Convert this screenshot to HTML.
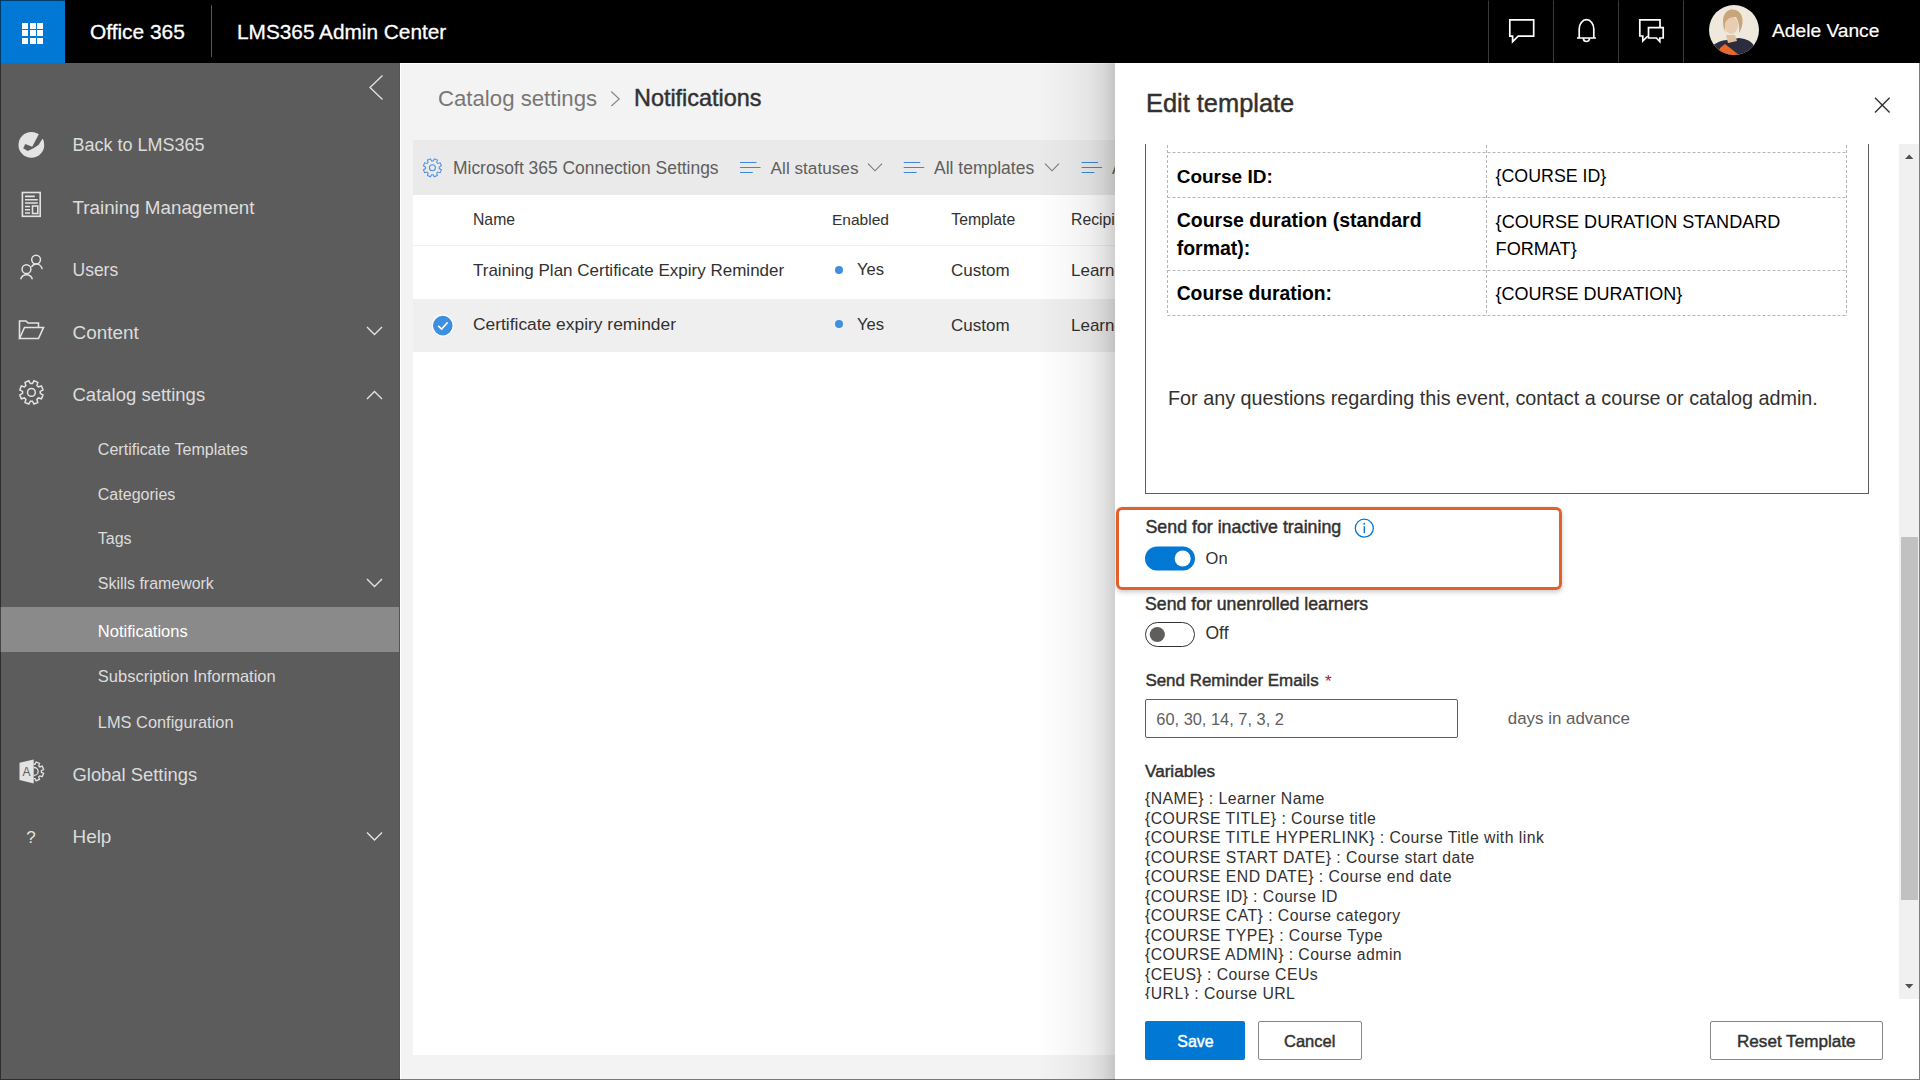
<!DOCTYPE html>
<html><head><meta charset="utf-8"><title>LMS365 Admin Center</title>
<style>
html,body{margin:0;padding:0;width:1920px;height:1080px;overflow:hidden;background:#f3f3f3}
body{position:relative;font-family:"Liberation Sans",sans-serif}
.t{position:absolute;white-space:pre;line-height:1}
.r{position:absolute}
</style></head><body>
<div class="r" style="left:0px;top:0px;width:1920px;height:63px;background:#000;"></div>
<div class="r" style="left:0px;top:0px;width:65px;height:63px;background:#0078d4;"></div>
<div class="r" style="left:22.2px;top:23.0px;width:5.9px;height:5.9px;background:#fff;"></div>
<div class="r" style="left:22.2px;top:30.4px;width:5.9px;height:5.9px;background:#fff;"></div>
<div class="r" style="left:22.2px;top:37.8px;width:5.9px;height:5.9px;background:#fff;"></div>
<div class="r" style="left:29.7px;top:23.0px;width:5.9px;height:5.9px;background:#fff;"></div>
<div class="r" style="left:29.7px;top:30.4px;width:5.9px;height:5.9px;background:#fff;"></div>
<div class="r" style="left:29.7px;top:37.8px;width:5.9px;height:5.9px;background:#fff;"></div>
<div class="r" style="left:37.2px;top:23.0px;width:5.9px;height:5.9px;background:#fff;"></div>
<div class="r" style="left:37.2px;top:30.4px;width:5.9px;height:5.9px;background:#fff;"></div>
<div class="r" style="left:37.2px;top:37.8px;width:5.9px;height:5.9px;background:#fff;"></div>
<div class="t" style="left:90px;top:21.91px;font-size:20.9px;color:#fff;font-weight:400;-webkit-text-stroke:0.3px #fff;">Office 365</div>
<div class="r" style="left:211px;top:5px;width:1px;height:52px;background:#555;"></div>
<div class="t" style="left:237px;top:21.99px;font-size:20.8px;color:#fff;font-weight:400;-webkit-text-stroke:0.3px #fff;">LMS365 Admin Center</div>
<div class="r" style="left:1488px;top:0px;width:1px;height:63px;background:#3a3a3a;"></div>
<div class="r" style="left:1553px;top:0px;width:1px;height:63px;background:#3a3a3a;"></div>
<div class="r" style="left:1618px;top:0px;width:1px;height:63px;background:#3a3a3a;"></div>
<div class="r" style="left:1683px;top:0px;width:1px;height:63px;background:#3a3a3a;"></div>
<svg class="r" style="left:1490px;top:0px" width="200" height="63" viewBox="1490 0 200 63">
<g fill="none" stroke="#fff" stroke-width="1.7">
<path d="M1509.8 19.9 H1533.7 V36.1 H1518.2 L1512.6 41.6 V36.1 H1509.8 Z"/>
<path d="M1577 38 H1596 M1579.2 38 V29 A7.3 9.3 0 0 1 1593.8 29 V38 M1583.5 38.5 A3 3 0 0 0 1589.5 38.5"/>
<path d="M1648.5 27.6 H1663.2 V38 H1659.8 V41.6 L1656.4 38 H1648.5 Z"/>
<path d="M1660 27.6 V19.9 H1639.8 V36 H1642.8 V41 L1647.8 36"/>
</g></svg>
<svg class="r" style="left:1709px;top:5px" width="50" height="50" viewBox="0 0 50 50">
<defs><clipPath id="av"><circle cx="25" cy="25" r="25"/></clipPath></defs>
<g clip-path="url(#av)">
<rect width="50" height="50" fill="#efe8dd"/>
<path d="M-2 52 L2 42 Q10 35 18 35 L30 33 Q42 34 46 42 L52 52 Z" fill="#2b2c3d"/>
<path d="M8 52 L11 43 L16 39 L30 50 L30 52 Z" fill="#e8692a"/>
<path d="M17 30 L26 30 L28 36 L19 38 Z" fill="#dfbf9f"/>
<ellipse cx="22.3" cy="20" rx="6.8" ry="9" fill="#e8cdb2"/>
<path d="M14.5 22 Q12 7 22 4.5 Q32 4 33.5 14 Q34 22 30 28 Q31 18 27 12 Q19 11 16 18 Q15.5 26 17 30 Z" fill="#c8a679"/>
</g></svg>
<div class="t" style="left:1772px;top:21.25px;font-size:19.2px;color:#fff;font-weight:400;-webkit-text-stroke:0.2px #fff;">Adele Vance</div>
<div class="r" style="left:0px;top:63px;width:400px;height:1017px;background:#5c5c5c;"></div>
<div class="r" style="left:399px;top:63px;width:1px;height:1017px;background:#555;"></div>
<svg class="r" style="left:360px;top:70px" width="30" height="36" viewBox="360 70 30 36">
<path d="M382.5 75.5 L370 87.5 L382.5 99.5" fill="none" stroke="#e3e3e3" stroke-width="1.3"/></svg>
<div class="t" style="left:72.5px;top:136.46px;font-size:18.0px;color:#dcdcdc;font-weight:400;">Back to LMS365</div>
<div class="t" style="left:72.5px;top:199.09px;font-size:18.8px;color:#dcdcdc;font-weight:400;">Training Management</div>
<div class="t" style="left:72.5px;top:261.89px;font-size:17.5px;color:#dcdcdc;font-weight:400;">Users</div>
<div class="t" style="left:72.5px;top:324.00px;font-size:18.9px;color:#dcdcdc;font-weight:400;">Content</div>
<div class="t" style="left:72.5px;top:386.14px;font-size:18.5px;color:#dcdcdc;font-weight:400;">Catalog settings</div>
<div class="t" style="left:72.5px;top:766.02px;font-size:18.4px;color:#dcdcdc;font-weight:400;">Global Settings</div>
<div class="t" style="left:72.5px;top:827.90px;font-size:18.9px;color:#dcdcdc;font-weight:400;">Help</div>
<div class="r" style="left:0px;top:607px;width:399px;height:45px;background:#8a8a8a;"></div>
<div class="t" style="left:97.8px;top:441.37px;font-size:16.1px;color:#dcdcdc;font-weight:400;">Certificate Templates</div>
<div class="t" style="left:97.8px;top:485.61px;font-size:16.05px;color:#dcdcdc;font-weight:400;">Categories</div>
<div class="t" style="left:97.8px;top:530.56px;font-size:16.0px;color:#dcdcdc;font-weight:400;">Tags</div>
<div class="t" style="left:97.8px;top:576.20px;font-size:15.95px;color:#dcdcdc;font-weight:400;">Skills framework</div>
<div class="t" style="left:97.8px;top:623.03px;font-size:16.5px;color:#fff;font-weight:400;">Notifications</div>
<div class="t" style="left:97.8px;top:667.53px;font-size:16.5px;color:#dcdcdc;font-weight:400;">Subscription Information</div>
<div class="t" style="left:97.8px;top:713.52px;font-size:16.4px;color:#dcdcdc;font-weight:400;">LMS Configuration</div>
<svg class="r" style="left:0;top:0" width="400" height="1080">
<g fill="none" stroke="#e3e3e3" stroke-width="1.4"><path d="M367 327 L374.5 334.5 L382 327 M367 399 L374.5 391.5 L382 399 M367 579 L374.5 586.5 L382 579 M367 832.5 L374.5 840.0 L382 832.5"/></g>
<circle cx="31.35" cy="144.9" r="12.85" fill="#e3e3e3"/>
<path d="M38.8 134.3 L32.2 146.7 L25.3 144 L23.2 148.2 L27.7 151 Q34 148.5 38.7 144.7 L42.3 139 L46.5 138 L42 130 Z" fill="#5c5c5c"/>
<g fill="none" stroke="#e3e3e3" stroke-width="1.6">
<rect x="22.4" y="192.5" width="17.8" height="23.8"/>
<path d="M25 196.4 H34.8 M25 199.8 H37.8 M25 203 H37.8 M25 206.5 H30 M25 209.8 H30 M25 213 H30"/>
<rect x="32.5" y="206" width="5.3" height="7.5"/>
</g>
<g fill="none" stroke="#e3e3e3" stroke-width="1.5">
<circle cx="26.5" cy="269.2" r="4.4"/>
<path d="M20.7 279.2 A6.2 6.8 0 0 1 32.4 279.2"/>
<circle cx="36.1" cy="259.6" r="4.4"/>
<path d="M31.5 266.8 A6.0 6.8 0 0 1 42.2 269.2"/>
</g>
<g fill="none" stroke="#e3e3e3" stroke-width="1.6">
<path d="M19.5 338.5 V321 H26 L28 323 H38.5 V327.5"/>
<path d="M19.5 338.5 L24.5 327.5 H43.5 L38.5 338.5 Z"/>
</g>
<g fill="none" stroke="#e3e3e3" stroke-width="1.5">
<path d="M32.41 383.56 L33.98 380.78 L37.79 382.36 L36.94 385.43 L38.37 386.86 L41.44 386.01 L43.02 389.82 L40.24 391.39 L40.24 393.41 L43.02 394.98 L41.44 398.79 L38.37 397.94 L36.94 399.37 L37.79 402.44 L33.98 404.02 L32.41 401.24 L30.39 401.24 L28.82 404.02 L25.01 402.44 L25.86 399.37 L24.43 397.94 L21.36 398.79 L19.78 394.98 L22.56 393.41 L22.56 391.39 L19.78 389.82 L21.36 386.01 L24.43 386.86 L25.86 385.43 L25.01 382.36 L28.82 380.78 L30.39 383.56 Z"/>
<circle cx="31.4" cy="392.4" r="3.9"/>
</g>
<defs><clipPath id="gh"><rect x="33.7" y="750" width="20" height="40"/></clipPath></defs>
<g clip-path="url(#gh)" fill="none" stroke="#e3e3e3" stroke-width="1.3">
<path d="M35.02 764.25 L36.11 761.99 L39.50 763.39 L38.68 765.77 L39.83 766.92 L42.21 766.10 L43.61 769.49 L41.35 770.58 L41.35 772.22 L43.61 773.31 L42.21 776.70 L39.83 775.88 L38.68 777.03 L39.50 779.41 L36.11 780.81 L35.02 778.55 L33.38 778.55 L32.29 780.81 L28.90 779.41 L29.72 777.03 L28.57 775.88 L26.19 776.70 L24.79 773.31 L27.05 772.22 L27.05 770.58 L24.79 769.49 L26.19 766.10 L28.57 766.92 L29.72 765.77 L28.90 763.39 L32.29 761.99 L33.38 764.25 Z"/>
<circle cx="34.2" cy="771.4" r="3.9"/>
</g>
<path d="M19.5 762.7 L33.7 759.5 V783.5 L19.5 780 Z" fill="#e3e3e3"/>
<text x="22.6" y="775.6" font-family="Liberation Sans" font-size="12" font-weight="400" fill="#5c5c5c">A</text>
<text x="26.3" y="843" font-family="Liberation Sans" font-size="17" fill="#e3e3e3">?</text>
</svg>
<div class="r" style="left:400px;top:63px;width:1520px;height:1017px;background:#f3f3f3;"></div>
<div class="r" style="left:400px;top:63px;width:1px;height:1017px;background:#fff;"></div>
<div class="r" style="left:400px;top:63px;width:715px;height:1px;background:#fff;"></div>
<div class="t" style="left:438px;top:88.11px;font-size:22.2px;color:#797775;font-weight:400;">Catalog settings</div>
<svg class="r" style="left:605px;top:85px" width="20" height="30"><path d="M6.3 6.5 L14.2 14 L6.3 21" fill="none" stroke="#8a8886" stroke-width="1.2"/></svg>
<div class="t" style="left:634px;top:87.09px;font-size:23.4px;color:#323130;font-weight:400;-webkit-text-stroke:0.45px currentColor;">Notifications</div>
<div class="r" style="left:413px;top:140px;width:702px;height:55px;background:#eaeaea;"></div>
<svg class="r" style="left:413px;top:140px" width="702" height="55" viewBox="413 140 702 55">
<g fill="none" stroke="#4a90e2" stroke-width="1.05">
<path d="M433.18 160.94 L434.39 158.82 L437.34 160.04 L436.70 162.40 L437.80 163.50 L440.16 162.86 L441.38 165.81 L439.26 167.02 L439.26 168.58 L441.38 169.79 L440.16 172.74 L437.80 172.10 L436.70 173.20 L437.34 175.56 L434.39 176.78 L433.18 174.66 L431.62 174.66 L430.41 176.78 L427.46 175.56 L428.10 173.20 L427.00 172.10 L424.64 172.74 L423.42 169.79 L425.54 168.58 L425.54 167.02 L423.42 165.81 L424.64 162.86 L427.00 163.50 L428.10 162.40 L427.46 160.04 L430.41 158.82 L431.62 160.94 Z"/>
<circle cx="432.4" cy="167.8" r="3.0"/>
</g>
<g fill="none" stroke="#3d87dc" stroke-width="1.1">
<path d="M740 162.5 H756.5 M740 167.5 H760.5 M740 172.5 H752.8"/>
<path d="M903.7 162.5 H920.2 M903.7 167.5 H924.2 M903.7 172.5 H916.5"/>
<path d="M1081.6 162.5 H1098.1 M1081.6 167.5 H1102.1 M1081.6 172.5 H1094.4"/>
</g>
<g fill="none" stroke="#797775" stroke-width="1.05">
<path d="M868 163.7 L875 170.8 L882 163.7"/>
<path d="M1045 163.7 L1052 170.8 L1059 163.7"/>
</g>
</svg>
<div class="t" style="left:453px;top:159.92px;font-size:17.46px;color:#605e5c;font-weight:400;">Microsoft 365 Connection Settings</div>
<div class="t" style="left:770.6px;top:160.14px;font-size:17.2px;color:#605e5c;font-weight:400;">All statuses</div>
<div class="t" style="left:934px;top:159.89px;font-size:17.5px;color:#605e5c;font-weight:400;">All templates</div>
<div class="t" style="left:1112px;top:159.89px;font-size:17.5px;color:#605e5c;font-weight:400;">A</div>
<div class="r" style="left:413px;top:195px;width:702px;height:860px;background:#fff;"></div>
<div class="r" style="left:413px;top:245px;width:702px;height:1px;background:#f0f0f0;"></div>
<div class="r" style="left:413px;top:299px;width:702px;height:1px;background:#f3f3f3;"></div>
<div class="r" style="left:413px;top:299px;width:702px;height:53px;background:#efefef;"></div>
<div class="t" style="left:473px;top:211.67px;font-size:15.75px;color:#323130;font-weight:400;">Name</div>
<div class="t" style="left:832px;top:211.88px;font-size:15.5px;color:#323130;font-weight:400;">Enabled</div>
<div class="t" style="left:951.3px;top:211.65px;font-size:15.77px;color:#323130;font-weight:400;">Template</div>
<div class="t" style="left:1071px;top:211.65px;font-size:15.77px;color:#323130;font-weight:400;">Recipients</div>
<div class="t" style="left:473px;top:262.11px;font-size:17.0px;color:#323130;font-weight:400;">Training Plan Certificate Expiry Reminder</div>
<div class="t" style="left:473px;top:316.27px;font-size:17.4px;color:#323130;font-weight:400;">Certificate expiry reminder</div>
<div class="t" style="left:857px;top:262.45px;font-size:16.6px;color:#323130;font-weight:400;">Yes</div>
<div class="t" style="left:951px;top:262.11px;font-size:17.0px;color:#323130;font-weight:400;">Custom</div>
<div class="t" style="left:1071px;top:262.11px;font-size:17.0px;color:#323130;font-weight:400;">Learners</div>
<div class="t" style="left:857px;top:316.95px;font-size:16.6px;color:#323130;font-weight:400;">Yes</div>
<div class="t" style="left:951px;top:316.61px;font-size:17.0px;color:#323130;font-weight:400;">Custom</div>
<div class="t" style="left:1071px;top:316.61px;font-size:17.0px;color:#323130;font-weight:400;">Learners</div>
<svg class="r" style="left:413px;top:195px" width="702" height="160" viewBox="413 195 702 160">
<circle cx="839" cy="270" r="4" fill="#3f8fe0"/>
<circle cx="839" cy="324" r="4" fill="#3f8fe0"/>
<circle cx="442.8" cy="325.6" r="11" fill="#fff"/>
<circle cx="442.8" cy="325.6" r="9.8" fill="#3f8fe0"/>
<path d="M438.2 325.8 L441.6 329 L447.6 322.4" fill="none" stroke="#fff" stroke-width="1.6"/>
</svg>
<div class="r" style="left:1035px;top:63px;width:80px;height:1017px;background:linear-gradient(to right,rgba(0,0,0,0) 0%,rgba(0,0,0,0.012) 20%,rgba(0,0,0,0.03) 45%,rgba(0,0,0,0.06) 68%,rgba(0,0,0,0.11) 85%,rgba(0,0,0,0.19) 100%)"></div>
<div class="r" style="left:1115px;top:63px;width:805px;height:1017px;background:#fff;"></div>
<div class="t" style="left:1146px;top:90.50px;font-size:25.4px;color:#323130;font-weight:400;-webkit-text-stroke:0.45px currentColor;">Edit template</div>
<svg class="r" style="left:1870px;top:93px" width="24" height="24" viewBox="1870 93 24 24"><path d="M1875 97.8 L1889.6 112.4 M1889.6 97.8 L1875 112.4" stroke="#323130" stroke-width="1.4" fill="none"/></svg>
<div class="r" style="left:1115px;top:144px;width:805px;height:855px;overflow:hidden">
<div class="r" style="left:30px;top:-14px;width:1px;height:363.5px;background:#605e5c;"></div>
<div class="r" style="left:753px;top:-14px;width:1px;height:363.5px;background:#605e5c;"></div>
<div class="r" style="left:30px;top:348.5px;width:724px;height:1px;background:#605e5c;"></div>
<svg class="r" style="left:0;top:0" width="805" height="200" viewBox="1115 144 805 200">
<g stroke="#b4b4b4" stroke-width="1" stroke-dasharray="3 2" fill="none">
<path d="M1167.5 130 V315.5 M1486.5 130 V315.5 M1846.5 130 V315.5"/>
<path d="M1167.5 152.5 H1846.5 M1167.5 197.5 H1846.5 M1167.5 270.5 H1846.5 M1167.5 315.5 H1846.5"/>
</g></svg>
<div class="t" style="left:61.700000000000045px;top:22.92px;font-size:19.0px;color:#000;font-weight:700;">Course ID:</div>
<div class="t" style="left:61.700000000000045px;top:67.49px;font-size:19.5px;color:#000;font-weight:700;">Course duration (standard</div>
<div class="t" style="left:61.700000000000045px;top:95.09px;font-size:19.5px;color:#000;font-weight:700;">format):</div>
<div class="t" style="left:61.700000000000045px;top:140.36px;font-size:19.3px;color:#000;font-weight:700;">Course duration:</div>
<div class="t" style="left:380.5999999999999px;top:24.13px;font-size:17.8px;color:#000;font-weight:400;">{COURSE ID}</div>
<div class="t" style="left:380.5999999999999px;top:68.68px;font-size:18.1px;color:#000;font-weight:400;">{COURSE DURATION STANDARD</div>
<div class="t" style="left:380.5999999999999px;top:96.28px;font-size:18.1px;color:#000;font-weight:400;">FORMAT}</div>
<div class="t" style="left:380.5999999999999px;top:141.46px;font-size:18.0px;color:#000;font-weight:400;">{COURSE DURATION}</div>
<div class="t" style="left:53px;top:245.44px;font-size:19.8px;color:#323130;font-weight:400;">For any questions regarding this event, contact a course or catalog admin.</div>
<div class="r" style="left:1px;top:363.4px;width:446px;height:82.3px;background:transparent;box-sizing:border-box;border:3px solid #e1602c;border-radius:6px;box-shadow:0 2px 5px rgba(0,0,0,0.22)"></div>
<div class="t" style="left:30.5px;top:374.93px;font-size:17.8px;color:#323130;font-weight:400;-webkit-text-stroke:0.45px currentColor;">Send for inactive training</div>
<svg class="r" style="left:0;top:0" width="805" height="520" viewBox="1115 144 805 520">
<circle cx="1364.3" cy="528.2" r="9" fill="none" stroke="#0078d4" stroke-width="1.3"/>
<rect x="1363.6" y="526.3" width="1.4" height="6.8" fill="#0078d4"/>
<circle cx="1364.3" cy="523.8" r="0.95" fill="#0078d4"/>
<rect x="1145" y="546.4" width="50" height="24.2" rx="12.1" fill="#0078d4"/>
<circle cx="1182.7" cy="558.5" r="8" fill="#fff"/>
<rect x="1145.5" y="622.5" width="49" height="24" rx="12" fill="#fff" stroke="#323130" stroke-width="1"/>
<circle cx="1157.3" cy="634.5" r="7.6" fill="#605e5c"/>
</svg>
<div class="t" style="left:90.59999999999991px;top:406.23px;font-size:16.5px;color:#323130;font-weight:400;">On</div>
<div class="t" style="left:30px;top:452.02px;font-size:17.7px;color:#323130;font-weight:400;-webkit-text-stroke:0.45px currentColor;">Send for unenrolled learners</div>
<div class="t" style="left:90.5px;top:480.89px;font-size:17.5px;color:#323130;font-weight:400;">Off</div>
<div class="t" style="left:30.40000000000009px;top:528.65px;font-size:16.95px;color:#323130;font-weight:400;-webkit-text-stroke:0.45px currentColor;">Send Reminder Emails</div>
<div class="t" style="left:210px;top:528.61px;font-size:17px;color:#a4262c;font-weight:400;">*</div>
<div class="r" style="left:30.40000000000009px;top:554.5px;width:312.3px;height:39.2px;background:#fff;box-sizing:border-box;border:1px solid #605e5c;border-radius:2px"></div>
<div class="t" style="left:41.299999999999955px;top:567.12px;font-size:16.4px;color:#605e5c;font-weight:400;">60, 30, 14, 7, 3, 2</div>
<div class="t" style="left:392.79999999999995px;top:566.69px;font-size:16.9px;color:#605e5c;font-weight:400;">days in advance</div>
<div class="t" style="left:30px;top:619.32px;font-size:17.1px;color:#323130;font-weight:400;-webkit-text-stroke:0.45px currentColor;">Variables</div>
<div class="t" style="left:30px;top:647.03px;font-size:15.8px;color:#323130;font-weight:400;letter-spacing:0.45px;">{NAME} : Learner Name</div>
<div class="t" style="left:30px;top:666.55px;font-size:15.8px;color:#323130;font-weight:400;letter-spacing:0.45px;">{COURSE TITLE} : Course title</div>
<div class="t" style="left:30px;top:686.07px;font-size:15.8px;color:#323130;font-weight:400;letter-spacing:0.45px;">{COURSE TITLE HYPERLINK} : Course Title with link</div>
<div class="t" style="left:30px;top:705.59px;font-size:15.8px;color:#323130;font-weight:400;letter-spacing:0.45px;">{COURSE START DATE} : Course start date</div>
<div class="t" style="left:30px;top:725.11px;font-size:15.8px;color:#323130;font-weight:400;letter-spacing:0.45px;">{COURSE END DATE} : Course end date</div>
<div class="t" style="left:30px;top:744.63px;font-size:15.8px;color:#323130;font-weight:400;letter-spacing:0.45px;">{COURSE ID} : Course ID</div>
<div class="t" style="left:30px;top:764.15px;font-size:15.8px;color:#323130;font-weight:400;letter-spacing:0.45px;">{COURSE CAT} : Course category</div>
<div class="t" style="left:30px;top:783.67px;font-size:15.8px;color:#323130;font-weight:400;letter-spacing:0.45px;">{COURSE TYPE} : Course Type</div>
<div class="t" style="left:30px;top:803.19px;font-size:15.8px;color:#323130;font-weight:400;letter-spacing:0.45px;">{COURSE ADMIN} : Course admin</div>
<div class="t" style="left:30px;top:822.71px;font-size:15.8px;color:#323130;font-weight:400;letter-spacing:0.45px;">{CEUS} : Course CEUs</div>
<div class="t" style="left:30px;top:842.23px;font-size:15.8px;color:#323130;font-weight:400;letter-spacing:0.45px;">{URL} : Course URL</div>
</div>
<div class="r" style="left:1899px;top:144px;width:20px;height:855px;background:#f0f0f0;"></div>
<div class="r" style="left:1901px;top:537px;width:16.6px;height:363.4px;background:#c1c1c1;"></div>
<svg class="r" style="left:1899px;top:144px" width="20" height="855" viewBox="1899 144 20 855">
<path d="M1905 159 L1909.2 154.6 L1913.4 159 Z" fill="#505050"/>
<path d="M1905 984 L1909.2 988.4 L1913.4 984 Z" fill="#505050"/>
</svg>
<div class="r" style="left:1145px;top:1020.5px;width:100px;height:39.1px;background:#0078d4;border-radius:2px"></div>
<div class="t" style="left:1177.3px;top:1033.74px;font-size:15.9px;color:#fff;font-weight:400;-webkit-text-stroke:0.45px currentColor;">Save</div>
<div class="r" style="left:1258.4px;top:1020.5px;width:103.3px;height:39.1px;background:#fff;box-sizing:border-box;border:1px solid #8a8886;border-radius:2px"></div>
<div class="t" style="left:1284px;top:1033.23px;font-size:16.5px;color:#323130;font-weight:400;-webkit-text-stroke:0.45px currentColor;">Cancel</div>
<div class="r" style="left:1710.2px;top:1020.5px;width:172.8px;height:39.1px;background:#fff;box-sizing:border-box;border:1px solid #8a8886;border-radius:2px"></div>
<div class="t" style="left:1737px;top:1032.72px;font-size:17.1px;color:#323130;font-weight:400;-webkit-text-stroke:0.45px currentColor;">Reset Template</div>
<div class="r" style="left:0;top:0;width:1920px;height:1080px;box-sizing:border-box;border:1px solid rgba(0,0,0,0.5)"></div>
</body></html>
